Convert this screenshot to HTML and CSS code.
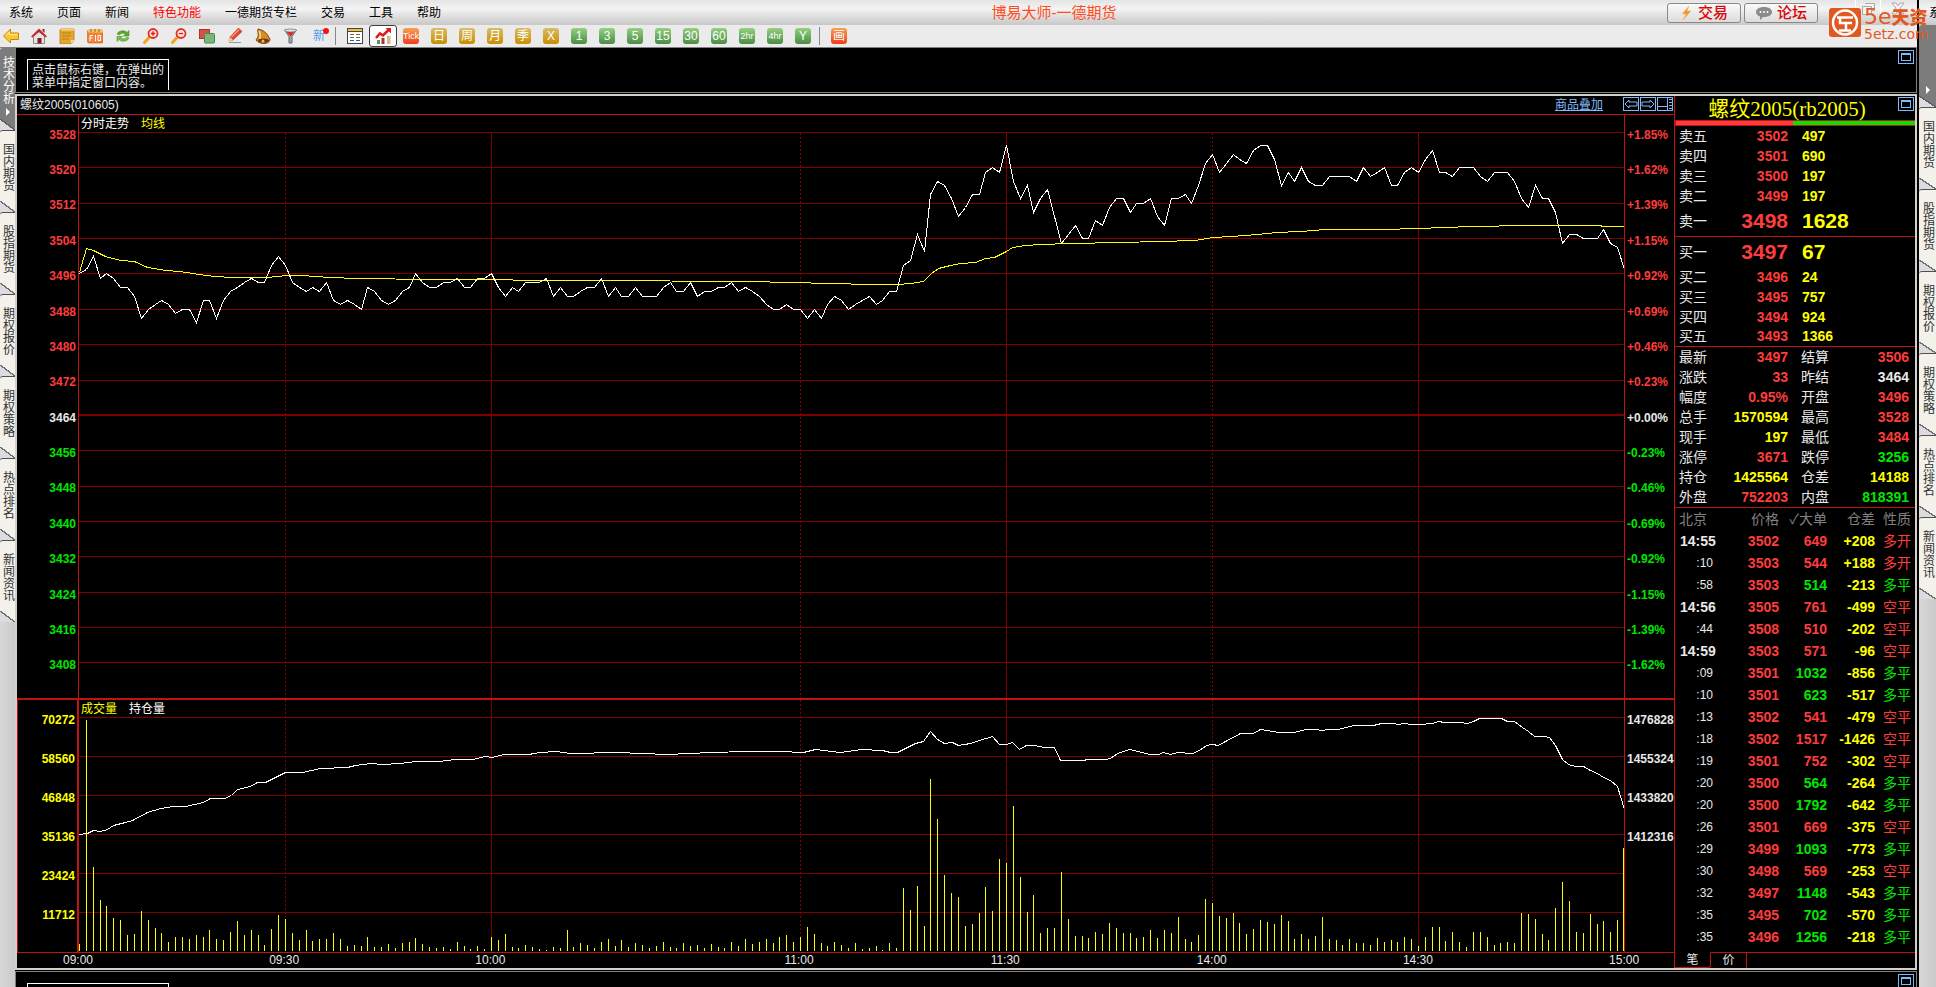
FILE: index.html
```html
<!DOCTYPE html>
<html lang="zh-CN">
<head>
<meta charset="utf-8">
<title>博易大师-一德期货</title>
<link rel="stylesheet" href="styles.css">
</head>
<body>
<div class="window">
  <header class="menubar">
    <nav class="menu">
      <a href="#">系统</a><a href="#">页面</a><a href="#">新闻</a><a href="#" class="hot">特色功能</a><a href="#">一德期货专栏</a><a href="#">交易</a><a href="#">工具</a><a href="#">帮助</a>
    </nav>
    <h1 class="app-title">博易大师-一德期货</h1>
    <div class="actions">
      <button class="action"><svg width="14" height="16" viewBox="0 0 14 16"><path d="M9 1 2 9h4l-3 6 8-9H7z" fill="#f0932b" stroke="#f7c06a" stroke-width=".6"/></svg>交易</button>
      <button class="action"><svg width="18" height="16" viewBox="0 0 18 16"><path d="M9 2c5 0 8 2.300 8 5s-3 5-8 5l-1 0-3 3v-3.500C2.500 10.700 1 9 1 7c0-2.700 3-5 8-5z" fill="#8b8b8b"/><g fill="#fff"><circle cx="5.500" cy="7" r="1"/><circle cx="9" cy="7" r="1"/><circle cx="12.500" cy="7" r="1"/></g></svg>论坛</button>
    </div>
    <div class="win-controls">
      <button aria-label="最小化"><svg width="24" height="20" viewBox="0 0 24 20"><path d="M6 14h9" stroke="#b0b0b0" stroke-width="3"/></svg></button>
      <button aria-label="还原"><svg width="24" height="20" viewBox="0 0 24 20"><path d="M9.500 3.500h9v7h-3M6.500 6.500h9v8h-9z" stroke="#a8a8a8" fill="#f4f4f4"/></svg></button>
      <button aria-label="关闭"><svg width="34" height="20" viewBox="0 0 34 20"><path d="M11 3h4l2 3 2-3h4l-4 5 4 6h-4l-2-3-2 3h-4l4-6z" stroke="#a8a8a8" fill="#f8f8f8"/></svg></button>
    </div>
  </header>

  <div class="toolbar">
    <button class="tool" aria-label="后退"><svg width="16" height="16" viewBox="0 0 16 16"><path d="M.5 8 7.500 1v4H15.500v6.500h-8V15z" fill="#fbc92f" stroke="#c8860a"/><path d="M3 7.500 6.500 4v2.500H14" stroke="#fff0a0" fill="none"/></svg></button>
    <button class="tool" aria-label="首页"><svg width="16" height="16" viewBox="0 0 16 16"><path d="M2.500 8v7.500h11V8L8 3.500z" fill="#e4e4e4" stroke="#8a8a8a"/><path d="M0 8.500 8 .5l8 8-1.500 1L8 4 1.500 9.500z" fill="#c8262e"/><path d="M11.500 1h2v4l-2-2z" fill="#8c3030"/><path d="M6.500 10h4v5.500h-4z" fill="#7c2028"/></svg></button>
    <button class="tool" aria-label="记事本"><svg width="16" height="16" viewBox="0 0 16 16"><path d="M2 1h13v11l-3 4H1V2z" fill="#e6a52c" stroke="#b67a12" stroke-width=".8"/><path d="M3 5h9M3 8h9M3 11h7" stroke="#a8741c" stroke-width=".8"/><path d="M2 1h13v1.500H2z" fill="#f9d47a"/><path d="M12 16v-4h3z" fill="#fae0a0"/></svg></button>
    <button class="tool" aria-label="F10"><svg width="16" height="16" viewBox="0 0 16 16"><rect x=".5" y="2" width="15.500" height="13" rx="1.500" fill="#ee8236" stroke="#c75c18" stroke-width=".6"/><path d="M1 2h15v2.500H1z" fill="#f7c45a"/><path d="M4 1v3M8 1v3M12 1v3" stroke="#a86212"/><path d="M3 13V7.500h3M3 10h2.500M8.500 7v6M11 7.500h2.500v5H11z" stroke="#fff" fill="none"/></svg></button>
    <button class="tool" aria-label="刷新"><svg width="16" height="16" viewBox="0 0 16 16"><path d="M2 6c2-4 8-4 10-1.500L14 2.500V8H8.500l1.800-1.800C8.500 4.600 5.500 5 4.500 7z" fill="#5cac2c" stroke="#3c8418" stroke-width=".5"/><path d="M14 10c-2 4-8 4-10 1.500L2 13.500V8.500h5.500L5.700 10c1.800 1.600 4.800 1.200 5.800-.8z" fill="#78c048" stroke="#3c8418" stroke-width=".5"/></svg></button>
    <button class="tool" aria-label="放大"><svg width="16" height="16" viewBox="0 0 16 16"><path d="m7 8.500-5.500 6" stroke="#f2a51c" stroke-width="3" stroke-linecap="round"/><circle cx="10" cy="5.500" r="4.500" fill="#ffe4e0" stroke="#e03226" stroke-width="1.800"/><path d="M7.800 5.500h4.400M10 3.300v4.400" stroke="#d02020" stroke-width="1.300"/></svg></button>
    <button class="tool" aria-label="缩小"><svg width="16" height="16" viewBox="0 0 16 16"><path d="m7 8.500-5.500 6" stroke="#f2a51c" stroke-width="3" stroke-linecap="round"/><circle cx="10" cy="5.500" r="4.500" fill="#ffe4e0" stroke="#e03226" stroke-width="1.800"/><path d="M7.800 5.500h4.400" stroke="#d02020" stroke-width="1.300"/></svg></button>
    <button class="tool" aria-label="叠加"><svg width="16" height="16" viewBox="0 0 16 16"><rect x=".5" y="1.500" width="10" height="9" fill="#d8504a" stroke="#a83430"/><rect x="5.500" y="5.500" width="10" height="9.500" rx="1" fill="#7cb67c" stroke="#438a4c"/></svg></button>
    <button class="tool" aria-label="画笔"><svg width="16" height="16" viewBox="0 0 16 16"><path d="M11.500 0 15 3.500 6 12l-4 1 1-4z" fill="#e8452c" stroke="#b02c18" stroke-width=".6"/><path d="M12 1.500 4.500 9" stroke="#f79a7c" stroke-width="1.500"/><path d="m3 9 3 3-5 2z" fill="#f5cf94"/><path d="M2 14.500h12" stroke="#999" stroke-width="1"/></svg></button>
    <button class="tool" aria-label="预警"><svg width="16" height="16" viewBox="0 0 16 16"><path d="M3 1c5 1 9 4 10 7l2 3c0 3-3 4.500-6 4.500S2 14 1 12l2-3c1-3-1-5 0-8z" fill="#d98d24" stroke="#7a4410"/><path d="M4 3c2 3 1 5 1 8" stroke="#ffe092" stroke-width="1.500" fill="none"/><ellipse cx="8.500" cy="12.500" rx="5.500" ry="2" fill="#6a3810"/><circle cx="8" cy="13" r="1.500" fill="#f6c050"/></svg></button>
    <button class="tool" aria-label="筛选"><svg width="16" height="16" viewBox="0 0 16 16"><path d="M1.500 2h12L9 8.500V15H6V8.500z" fill="#a8a8a8" stroke="#666"/><path d="M3.500 3.500h8l-4 5z" fill="#e42222"/><ellipse cx="7.500" cy="2.500" rx="6" ry="1.500" fill="#e4e4e4" stroke="#777" stroke-width=".7"/></svg></button>
    <button class="tool new">新<i></i></button>
    <span class="sep"></span>
    <button class="tool" aria-label="报价"><svg width="16" height="16" viewBox="0 0 16 16"><rect x=".5" y=".5" width="15" height="15" fill="#fff" stroke="#444"/><path d="M1 1h14v2H1z" fill="#f3c03c"/><path d="M1 3.500h14" stroke="#444"/><path d="M3 6.500h4M9 6.500h4" stroke="#d43030"/><path d="M3 9.500h4M9 9.500h4" stroke="#2c9a38"/><path d="M3 12.500h4M9 12.500h4" stroke="#2858c0"/></svg></button>
    <button class="tool active" aria-label="走势图"><svg width="16" height="16" viewBox="0 0 16 16"><path d="M2 12h3v4H2z" fill="#5c9650"/><path d="M6.500 10h3v6h-3z" fill="#a43630"/><path d="M12 8h3.500v8H12z" fill="#d8b888"/><path d="m1 10 4-4.500 3 2L14.500 1" stroke="#e01818" stroke-width="2.500" fill="none"/><path d="M10.500 0H16v5.500z" fill="#e01818"/></svg></button>
    <button class="tool"><b class="chip orange narrow">Tick</b></button>
    <button class="tool"><b class="chip gold">日</b></button>
    <button class="tool"><b class="chip gold">周</b></button>
    <button class="tool"><b class="chip gold">月</b></button>
    <button class="tool"><b class="chip gold">季</b></button>
    <button class="tool"><b class="chip gold">X</b></button>
    <button class="tool"><b class="chip green">1</b></button>
    <button class="tool"><b class="chip green">3</b></button>
    <button class="tool"><b class="chip green">5</b></button>
    <button class="tool"><b class="chip green">15</b></button>
    <button class="tool"><b class="chip green">30</b></button>
    <button class="tool"><b class="chip green">60</b></button>
    <button class="tool"><b class="chip green narrow">2hr</b></button>
    <button class="tool"><b class="chip green narrow">4hr</b></button>
    <button class="tool"><b class="chip green">Y</b></button>
    <span class="sep"></span>
    <button class="tool"><b class="chip orange">画</b></button>
  </div>

  <div class="desk">
    <aside class="tabs">
      <button class="tab current"><span>技术分析</span><i></i></button>
      <button class="tab"><span>国内期货</span></button>
      <button class="tab"><span>股指期货</span></button>
      <button class="tab"><span>期权报价</span></button>
      <button class="tab"><span>期权策略</span></button>
      <button class="tab"><span>热点排名</span></button>
      <button class="tab"><span>新闻资讯</span></button>
    </aside>

    <main class="content">
      <section class="hint-panel upper">
        <p class="hint">点击鼠标右键，在弹出的<br>菜单中指定窗口内容。</p>
        <button class="maximize" aria-label="最大化"></button>
      </section>

      <section class="workspace">
        <div class="chart">
          <div class="chart-head">
            <span>螺纹2005(010605)</span>
            <div class="chart-tools">
              <a href="#">商品叠加</a>
              <button aria-label="向左"><svg width="14" height="12" viewBox="0 0 14 12"><path d="M1 6 5 2v2h8v4H5v2z"/></svg></button>
              <button aria-label="向右"><svg width="14" height="12" viewBox="0 0 14 12"><path d="M13 6 9 2v2H1v4h8v2z"/></svg></button>
              <button aria-label="布局"><svg width="14" height="12" viewBox="0 0 14 12"><path d="M0 8.500h9M9.500 0v12M11 1.500h3M11 4.500h3M11 7.500h3M11 10.500h3"/></svg></button>
            </div>
          </div>
          <ol class="axis left price">
            <li class="up">3528</li><li class="up">3520</li><li class="up">3512</li><li class="up">3504</li><li class="up">3496</li><li class="up">3488</li><li class="up">3480</li><li class="up">3472</li><li>3464</li><li class="down">3456</li><li class="down">3448</li><li class="down">3440</li><li class="down">3432</li><li class="down">3424</li><li class="down">3416</li><li class="down">3408</li>
          </ol>
          <div class="pane">
            <svg id="price-plot" viewBox="0 0 1545 583" preserveAspectRatio="none"></svg>
            <div class="legend"><span>分时走势</span><span class="yellow">均线</span></div>
          </div>
          <ol class="axis right price">
            <li class="up">+1.85%</li><li class="up">+1.62%</li><li class="up">+1.39%</li><li class="up">+1.15%</li><li class="up">+0.92%</li><li class="up">+0.69%</li><li class="up">+0.46%</li><li class="up">+0.23%</li><li>+0.00%</li><li class="down">-0.23%</li><li class="down">-0.46%</li><li class="down">-0.69%</li><li class="down">-0.92%</li><li class="down">-1.15%</li><li class="down">-1.39%</li><li class="down">-1.62%</li>
          </ol>
          <div class="divider"></div>
          <ol class="axis left volume yellow">
            <li>70272</li><li>58560</li><li>46848</li><li>35136</li><li>23424</li><li>11712</li>
          </ol>
          <div class="pane">
            <svg id="volume-plot" viewBox="0 0 1545 252" preserveAspectRatio="none"></svg>
            <div class="legend"><span class="yellow">成交量</span><span>持仓量</span></div>
          </div>
          <ol class="axis right volume">
            <li>1476828</li><li>1455324</li><li>1433820</li><li>1412316</li><li></li><li></li>
          </ol>
          <div class="times">
            <span class="m30">09:00</span><span class="m30">09:30</span><span class="m45">10:00</span><span class="m30">11:00</span><span class="m30">11:30</span><span class="m30">14:00</span><span class="m30">14:30</span><span class="end">15:00</span>
          </div>
        </div>

        <div class="quote">
          <h2 class="quote-title">螺纹2005(rb2005)<button class="maximize" aria-label="最大化"></button></h2>
          <div class="ratio"><i class="sell"></i><i class="buy"></i></div>
          <table class="book">
            <tr><th>卖五</th><td>3502</td><td>497</td></tr>
            <tr><th>卖四</th><td>3501</td><td>690</td></tr>
            <tr><th>卖三</th><td>3500</td><td>197</td></tr>
            <tr><th>卖二</th><td>3499</td><td>197</td></tr>
            <tr class="best"><th>卖一</th><td>3498</td><td>1628</td></tr>
          </table>
          <table class="book">
            <tr class="best"><th>买一</th><td>3497</td><td>67</td></tr>
            <tr><th>买二</th><td>3496</td><td>24</td></tr>
            <tr><th>买三</th><td>3495</td><td>757</td></tr>
            <tr><th>买四</th><td>3494</td><td>924</td></tr>
            <tr><th>买五</th><td>3493</td><td>1366</td></tr>
          </table>
          <table class="stats">
            <tr><th>最新</th><td class="up">3497</td><th>结算</th><td class="up">3506</td></tr>
            <tr><th>涨跌</th><td class="up">33</td><th>昨结</th><td>3464</td></tr>
            <tr><th>幅度</th><td class="up">0.95%</td><th>开盘</th><td class="up">3496</td></tr>
            <tr><th>总手</th><td class="yellow">1570594</td><th>最高</th><td class="up">3528</td></tr>
            <tr><th>现手</th><td class="yellow">197</td><th>最低</th><td class="up">3484</td></tr>
            <tr><th>涨停</th><td class="up">3671</td><th>跌停</th><td class="down">3256</td></tr>
            <tr><th>持仓</th><td class="yellow">1425564</td><th>仓差</th><td class="yellow">14188</td></tr>
            <tr><th>外盘</th><td class="up">752203</td><th>内盘</th><td class="down">818391</td></tr>
          </table>
          <table class="trades">
            <thead><tr><th>北京</th><th>价格</th><th>✓大单</th><th>仓差</th><th>性质</th></tr></thead>
            <tbody>
            <tr class="up"><td class="full">14:55</td><td>3502</td><td>649</td><td>+208</td><td>多开</td></tr>
            <tr class="up"><td>:10</td><td>3503</td><td>544</td><td>+188</td><td>多开</td></tr>
            <tr class="down"><td>:58</td><td>3503</td><td>514</td><td>-213</td><td>多平</td></tr>
            <tr class="up"><td class="full">14:56</td><td>3505</td><td>761</td><td>-499</td><td>空平</td></tr>
            <tr class="up"><td>:44</td><td>3508</td><td>510</td><td>-202</td><td>空平</td></tr>
            <tr class="up"><td class="full">14:59</td><td>3503</td><td>571</td><td>-96</td><td>空平</td></tr>
            <tr class="down"><td>:09</td><td>3501</td><td>1032</td><td>-856</td><td>多平</td></tr>
            <tr class="down"><td>:10</td><td>3501</td><td>623</td><td>-517</td><td>多平</td></tr>
            <tr class="up"><td>:13</td><td>3502</td><td>541</td><td>-479</td><td>空平</td></tr>
            <tr class="up"><td>:18</td><td>3502</td><td>1517</td><td>-1426</td><td>空平</td></tr>
            <tr class="up"><td>:19</td><td>3501</td><td>752</td><td>-302</td><td>空平</td></tr>
            <tr class="down"><td>:20</td><td>3500</td><td>564</td><td>-264</td><td>多平</td></tr>
            <tr class="down"><td>:20</td><td>3500</td><td>1792</td><td>-642</td><td>多平</td></tr>
            <tr class="up"><td>:26</td><td>3501</td><td>669</td><td>-375</td><td>空平</td></tr>
            <tr class="down"><td>:29</td><td>3499</td><td>1093</td><td>-773</td><td>多平</td></tr>
            <tr class="up"><td>:30</td><td>3498</td><td>569</td><td>-253</td><td>空平</td></tr>
            <tr class="down"><td>:32</td><td>3497</td><td>1148</td><td>-543</td><td>多平</td></tr>
            <tr class="down"><td>:35</td><td>3495</td><td>702</td><td>-570</td><td>多平</td></tr>
            <tr class="down"><td>:35</td><td>3496</td><td>1256</td><td>-218</td><td>多平</td></tr>
            </tbody>
          </table>
          <div class="quote-tabs"><button class="on">笔</button><button>价</button></div>
        </div>
      </section>

      <section class="hint-panel lower">
        <p class="hint"></p>
        <button class="maximize" aria-label="最大化"></button>
      </section>
    </main>
  </div>
</div>

<div class="next-window">
  <div class="next-menu">系</div>
  <aside class="tabs">
    <button class="tab current" aria-label="技术分析"><i></i></button>
    <button class="tab"><span>国内期货</span></button>
    <button class="tab"><span>股指期货</span></button>
    <button class="tab"><span>期权报价</span></button>
    <button class="tab"><span>期权策略</span></button>
    <button class="tab"><span>热点排名</span></button>
    <button class="tab"><span>新闻资讯</span></button>
  </aside>
</div>

<div class="brand">
  <svg width="32" height="29" viewBox="0 0 32 29"><rect width="32" height="29" rx="3" fill="#e2581f"/><circle cx="16" cy="14.500" r="12" fill="none" stroke="#fff" stroke-width="2.500"/><path d="M8 9.500h16M11 9.500v5.500h12M17 15v8M10 22.500h12" stroke="#fff" stroke-width="2.500" fill="none"/></svg>
  <div class="brand-text"><strong><span>5e</span>天资</strong><small>5etz.com</small></div>
</div>
<script src="app.js"></script>
</body>
</html>
```
FILE: styles.css
```css
* { box-sizing: border-box; }
:root {
  --up: #ff3c3c;
  --down: #00e600;
  --yellow: #ffff00;
  --line: #c01414;
  --frame: #d4d0c8;
  --blue: #80b8f8;
}
body {
  margin: 0;
  height: 100vh;
  display: flex;
  overflow: hidden;
  position: relative;
  background: #000;
  color: #e8e8e8;
  font: 12px/16px "Liberation Sans", "Noto Sans CJK SC", sans-serif;
}
button { font: inherit; color: inherit; background: none; border: 0; padding: 0; margin: 0; }
a { color: inherit; text-decoration: none; }
h1, h2, p, ol { margin: 0; padding: 0; list-style: none; }
table { border-collapse: collapse; border-spacing: 0; }
i { font-style: normal; }
svg { display: block; flex: none; }
.up { color: var(--up); }
.down { color: var(--down); }
.yellow, .legend .yellow { color: var(--yellow); }

.window { flex: 1; min-width: 0; display: flex; flex-direction: column; border-right: 2px solid #000; box-sizing: content-box; }

/* menu bar */
.menubar { height: 25px; display: flex; align-items: center; color: #000; background: linear-gradient(#e4e4e4, #f4f4f4 35%, #e2e2e2 60%, #c8c8c8); }
.menu { display: flex; gap: 24px; padding-left: 9px; }
.menu .hot { color: #ff0000; }
.app-title { flex: 1; text-align: center; font-size: 15px; font-weight: 400; line-height: 20px; color: #ff4c1c; }
.actions { display: flex; gap: 3px; }
.action { width: 74px; height: 20px; display: flex; align-items: center; justify-content: center; gap: 4px; border: 1px solid #888; border-radius: 3px; background: linear-gradient(#fafafa, #dcdcdc); color: #d80808; font-size: 15px; font-weight: 500; line-height: 18px; }
.win-controls { display: flex; padding-left: 13px; width: 99px; height: 20px; align-self: flex-start; }
.win-controls button + button { border-left: 1px solid #fff; }

/* toolbar */
.toolbar { height: 23px; display: flex; align-items: stretch; margin-left: -3px; background: #ebebeb; border-bottom: 1px solid #808080; }
.tool { width: 28px; display: flex; align-items: center; justify-content: center; position: relative; border: 1px solid transparent; }
.tool.active { background: #fff; border: 1px solid #404040; border-radius: 3px; }
.tool.new { color: #4c9cf0; line-height: 16px; }
.tool.new i { position: absolute; right: 3px; top: 2px; width: 6px; height: 6px; border-radius: 50%; background: #ff1010; }
.sep { width: 8px; margin: 2px 0; background: linear-gradient(#888, #888) 2px 0 / 1px 100% no-repeat; }
.chip { width: 16px; height: 16px; border-radius: 3px; color: #fff; font-size: 12px; font-weight: 400; line-height: 16px; text-align: center; overflow: hidden; }
.chip.narrow { font-size: 9px; }
.gold { background: linear-gradient(#d9bc68, #c98e00); }
.green { background: linear-gradient(#96d080, #4a8c44); }
.orange { background: linear-gradient(#f6a052, #f03c1c); }

/* side tabs */
.desk { flex: 1; min-height: 0; display: flex; }
.tabs { width: 15px; flex: none; display: flex; flex-direction: column; background: linear-gradient(90deg, #d8d8d8, #cacaca); }
.tab { height: 82px; flex: none; padding: 12px 0 0; display: flex; flex-direction: column; align-items: center; color: #303030; border-top: 1px solid #505050; border-top-left-radius: 3px; background: linear-gradient(#f2f1ea, #f2f1ea) 0 0 / 100% 70px no-repeat, linear-gradient(to bottom left, #f2f1ea 46%, #707070 46% 54%, #dcdce0 54%) 0 70px / 100% 11px no-repeat; }
.tab span { writing-mode: vertical-rl; line-height: 14px; font-size: 12px; }
.tab.current { color: #fff; border-top: 0; padding-top: 8px; background: linear-gradient(#7c7c7c, #7c7c7c) 0 0 / 100% 71px no-repeat, linear-gradient(to bottom left, #7c7c7c 46%, #606060 46% 54%, #dcdce0 54%) 0 71px / 100% 11px no-repeat; }
.tab i { width: 0; height: 0; margin-top: 4px; border: 4px solid transparent; border-left-color: #fff; border-right: 0; }

.content { flex: 1; min-width: 0; display: flex; flex-direction: column; }

/* empty panels above and below */
.hint-panel { overflow: hidden; display: flex; justify-content: space-between; align-items: flex-start; border-right: 1px solid #808080; }
.hint-panel.upper { height: 45px; flex: none; padding: 2px 2px 0 11px; border-bottom: 1px solid #808080; border-left: 1px solid #808080; }
.hint-panel.lower { height: 16px; flex: none; padding: 2px 2px 0 11px; margin-top: 1px; border-top: 1px solid #808080; border-left: 1px solid #808080; }
.hint { margin-top: 9px; padding: 4px; width: 142px; height: 31px; border: 1px solid #fff; border-bottom: 0; line-height: 13px; white-space: nowrap; }
.maximize { width: 16px; height: 14px; flex: none; border: 1px solid var(--blue); background: linear-gradient(#000, #000) 3px 4px / 8px 5px no-repeat, linear-gradient(var(--blue), var(--blue)) 2px 2px / 10px 8px no-repeat; }

/* workspace */
.workspace { flex: 1; min-height: 0; margin-top: 1px; display: flex; border: 2px solid var(--frame); }
.chart { flex: 1; min-width: 0; display: grid; grid-template-columns: 61px minmax(0, 1fr) 50px; grid-template-rows: 19px minmax(0, 583fr) 2px minmax(0, 252fr) 16px; }
.chart-head { grid-column: 1 / -1; display: flex; justify-content: space-between; padding: 1px 1px 0 3px; border-bottom: 1px solid var(--line); }
.chart-tools { display: flex; gap: 1px; color: var(--blue); }
.chart-tools a { text-decoration: underline; margin-right: 19px; }
.chart-tools button { width: 16px; height: 14px; border: 1px solid var(--blue); }
.chart-tools path { fill: none; stroke: var(--blue); }
.axis { display: flex; flex-direction: column; font-weight: 700; }
.axis li { flex: 1; display: flex; align-items: center; }
.axis.price { padding: 2px 0 15px; }
.axis.volume { padding-bottom: 18px; }
.axis.left li { justify-content: flex-end; padding-right: 2px; }
.axis.right { border-left: 1px solid var(--line); padding-left: 2px; white-space: nowrap; }
.axis.left { border-right: 1px solid var(--line); margin-right: -1px; }
.axis.left.volume { border-left: 1px solid var(--line); border-right-width: 2px; }
.pane { display: grid; grid-template: minmax(0, 1fr) / minmax(0, 1fr); margin-left: 1px; }
.pane > * { grid-area: 1 / 1; }
.pane svg { width: 100%; height: 100%; shape-rendering: crispEdges; }
.pane path { fill: none; stroke-width: 1; vector-effect: non-scaling-stroke; }
.pane .grid-line { stroke: #800000; }
.pane .grid-line.dotted { stroke-dasharray: 2 2; }
.pane .grid-line.base { stroke-width: 2; }
.line-white { stroke: #fff; }
.line-yellow { stroke: var(--yellow); }
.legend { align-self: start; display: flex; gap: 12px; padding: 1px 2px; color: #fff; }
.divider { grid-column: 1 / -1; background: var(--line); }
.times { grid-column: 1 / -1; border-top: 1px solid var(--line); display: flex; padding: 0 65px 0 46px; line-height: 15px; white-space: nowrap; }
.times span { flex: 30 1 0; min-width: 0; }
.times .m45 { flex-grow: 45; }
.times .end { flex: none; width: 0; }

/* quote panel */
.quote { width: 241px; flex: none; border-left: 1px solid var(--line); display: flex; flex-direction: column; font-size: 14px; }
.quote-title { height: 24px; position: relative; padding-right: 16px; text-align: center; color: var(--yellow); font: 400 21px/26px "Liberation Serif", "Noto Sans CJK SC", serif; }
.quote-title .maximize { position: absolute; right: 1px; top: 1px; }
.ratio { height: 6px; flex: none; display: flex; border: 1px solid var(--line); border-right: 0; }
.ratio .sell { flex: 117; background: var(--up); }
.ratio .buy { flex: 121; background: var(--down); }
.quote table { width: 100%; table-layout: fixed; border-bottom: 1px solid var(--line); }
.quote th { font-weight: 400; text-align: left; padding: 0; white-space: nowrap; }
.quote td { font-weight: 700; text-align: right; padding: 0; white-space: nowrap; }
.book tr, .stats tr { height: 20px; line-height: 18px; }
.book .best { height: 30px; }
.quote .book th, .quote .stats th:first-child { width: 45px; padding-left: 4px; }
.book td { color: var(--up); width: 68px; }
.quote .book td:last-child { color: var(--yellow); text-align: left; width: auto; padding-left: 14px; }
.book .best td { font-size: 21px; }
.stats td { width: 68px; }
.quote .stats th:nth-child(3) { width: 58px; padding-left: 13px; }
.quote .stats td:last-child { width: auto; padding-right: 6px; }
.trades tr { height: 22px; line-height: 20px; }
.quote .trades { border-bottom: 0; }
.trades th { color: #808080; }
.quote .trades th + th { text-align: right; }
.quote .trades th:nth-child(1) { width: 50px; padding-left: 4px; }
.trades th:nth-child(2) { width: 54px; }
.trades th:nth-child(3) { width: 48px; }
.trades th:nth-child(4) { width: 48px; }
.quote .trades th:last-child { padding-right: 4px; }
.quote .trades td:first-child { color: #e8e8e8; font-size: 12px; font-weight: 400; padding-right: 12px; }
.quote .trades td.full { font-size: 14px; font-weight: 700; text-align: left; padding: 0 0 0 5px; }
.trades td:nth-child(2) { color: var(--up); }
.trades td:nth-child(4) { color: var(--yellow); }
.quote .trades td:last-child { font-weight: 400; padding-right: 4px; }
.quote-tabs { margin-top: auto; height: 16px; display: flex; font-size: 12px; line-height: 14px; }
.quote-tabs button { width: 36px; border-right: 1px solid var(--line); border-top: 1px solid var(--line); line-height: 13px; }
.quote-tabs .on { border-top-color: #000; border-bottom: 1px solid var(--line); border-bottom-right-radius: 3px; }
.quote-tabs::after { content: ""; flex: 1; border-top: 1px solid var(--line); }

/* neighbouring window */
.next-window { width: 17px; flex: none; display: flex; flex-direction: column; overflow: hidden; background: #d0d0d0; }
.next-menu { height: 25px; padding-left: 10px; line-height: 26px; white-space: nowrap; color: #000; background: linear-gradient(#e4e4e4, #f4f4f4 35%, #e2e2e2 60%, #c8c8c8); }
.next-window .tabs { flex: 1; width: 17px; }
.next-window .tab.current i { margin: 53px 0 0; }

/* watermark */
.brand { position: absolute; right: 4px; top: 8px; display: flex; gap: 3px; color: #e2581f; }
.brand-text { display: flex; flex-direction: column; width: 68px; white-space: nowrap; }
.brand strong { display: flex; align-items: baseline; font-size: 18px; line-height: 17px; font-weight: 900; }
.brand strong span { font: 400 22px/17px "DejaVu Sans", sans-serif; }
.brand small { font: 14px/14px "DejaVu Sans", sans-serif; }
```
FILE: app.js
```js
const WIDTH = 1545;
const MINUTES = 225;
const xAt = i => Math.round(i * WIDTH / MINUTES);

const prices = [
  3496,3497,3500,3495,3496,3495,3493,3493,3491,3486,3488,3489,3490,3489,3487,3488,3488,3485,3490,3490,
  3486,3490,3492,3493,3494,3495,3494,3494,3498,3500,3498,3494,3493,3492,3493,3492,3494,3490,3489,3490,
  3489,3488,3493,3492,3490,3489,3490,3492,3493,3496,3494,3493,3493,3494,3494,3495,3493,3493,3495,3495,
  3496,3493,3491,3493,3492,3494,3494,3494,3495,3491,3493,3491,3491,3492,3493,3493,3495,3491,3493,3491,
  3491,3493,3491,3491,3491,3493,3494,3492,3492,3494,3491,3492,3492,3493,3493,3494,3492,3493,3492,3491,
  3489,3488,3488,3489,3488,3488,3486,3488,3486,3489,3491,3490,3488,3489,3490,3491,3489,3490,3492,3492,
  3498,3499,3505,3501,3514,3517,3516,3513,3509,3511,3514,3514,3519,3520,3519,3525,3517,3513,3516,3510,
  3513,3515,3509,3503,3505,3507,3504,3504,3508,3507,3511,3513,3513,3510,3512,3512,3513,3509,3507,3513,
  3513,3514,3512,3516,3521,3523,3519,3521,3523,3522,3521,3524,3525,3525,3522,3516,3519,3517,3520,3517,
  3516,3516,3518,3518,3518,3518,3517,3520,3518,3519,3520,3516,3516,3519,3520,3519,3522,3524,3519,3519,
  3518,3520,3520,3520,3518,3517,3519,3519,3519,3517,3513,3511,3516,3513,3513,3510,3503,3505,3505,3504,
  3504,3504,3506,3503,3502,3497
];

const average = [
  0,157, 7,133, 14,135, 26,141, 41,145, 55,146, 68,152, 86,155, 100,156, 120,159, 135,161, 154,162, 187,162,
  208,160, 223,160, 250,162, 278,163, 353,164, 512,165, 669,166, 711,167, 791,169, 819,169, 831,168, 844,166,
  852,158, 859,153, 871,150, 881,148, 896,147, 906,143, 915,142, 927,136, 933,132, 946,130, 961,129, 991,128,
  1041,127, 1080,126, 1116,125, 1134,122, 1152,121, 1178,119, 1197,117, 1221,116, 1246,114, 1300,114,
  1341,113, 1362,112, 1396,111, 1444,110, 1520,110, 1524,111, 1545,111
];

const interest = [
  0,134, 8,133, 14,130, 21,131, 28,129, 34,125, 46,122, 53,120, 68,112, 81,108, 94,106, 106,106, 124,102, 131,98,
  145,98, 152,95, 158,89, 171,86, 178,82, 186,82, 206,72, 223,72, 241,68, 268,67, 276,65, 291,63, 303,64, 321,63,
  336,61, 359,61, 376,59, 393,59, 406,56, 413,57, 424,54, 449,54, 461,52, 477,51, 491,53, 538,52, 588,54,
  631,52, 668,51, 700,51, 724,52, 736,49, 761,52, 782,49, 803,50, 811,52, 818,52, 836,43, 844,41, 851,31, 858,39,
  865,43, 873,42, 879,45, 891,43, 900,40, 913,36, 920,44, 927,44, 933,42, 940,49, 947,45, 955,45, 965,47,
  975,47, 981,60, 1005,60, 1007,59, 1026,59, 1031,58, 1038,53, 1050,49, 1071,54, 1079,54, 1084,52, 1091,54,
  1098,52, 1113,53, 1120,50, 1127,45, 1133,44, 1139,45, 1146,41, 1161,33, 1174,33, 1181,29, 1200,32, 1215,32,
  1226,29, 1236,29, 1243,30, 1249,29, 1259,29, 1274,25, 1294,25, 1302,23, 1313,23, 1319,24, 1325,23, 1332,24,
  1340,24, 1353,23, 1359,21, 1365,22, 1381,22, 1388,23, 1394,21, 1400,18, 1422,18, 1428,21, 1435,21, 1443,27,
  1449,31, 1455,36, 1464,36, 1470,37, 1476,45, 1483,59, 1489,64, 1496,66, 1504,66, 1511,70, 1518,73, 1524,77,
  1531,80, 1538,86, 1545,109
];

const volumes = [
  7,231,84,51,45,33,31,16,17,40,31,23,18,9,14,14,12,16,14,21,
  12,11,19,30,16,21,16,6,22,36,32,18,11,21,10,12,12,18,12,5,
  6,5,14,4,4,7,3,8,9,13,7,4,3,4,2,9,5,2,5,2,
  14,11,17,4,3,6,4,2,1,4,3,21,4,8,6,3,9,12,5,11,
  4,8,6,3,5,9,4,3,8,5,6,3,7,4,3,9,5,12,7,9,
  12,8,14,16,9,14,24,17,8,5,9,6,3,8,2,3,5,1,8,3,
  63,41,65,25,172,132,76,58,54,25,27,38,64,40,92,88,145,74,39,56,
  18,23,23,79,32,15,15,13,19,17,28,23,18,18,13,14,21,13,21,18,
  34,12,9,16,52,48,35,33,38,28,17,22,31,29,27,36,30,12,17,12,
  15,34,12,11,6,12,8,8,6,13,9,11,9,14,12,5,14,24,24,10,
  19,9,4,19,19,14,6,8,9,8,38,37,32,17,11,43,69,50,19,18,
  37,27,30,19,31,103
];

function add(svg, className, d) {
  const path = document.createElementNS('http://www.w3.org/2000/svg', 'path');
  path.setAttribute('class', className);
  path.setAttribute('d', d);
  svg.appendChild(path);
}

function polyline(flat) {
  let d = '';
  for (let i = 0; i < flat.length; i += 2) {
    d += (i ? 'L' : 'M') + (flat[i] + 0.5) + ' ' + (flat[i + 1] + 0.5);
  }
  return d;
}

function verticals(svg, top, bottom) {
  [30, 105, 165].forEach(m => add(svg, 'grid-line dotted', `M${xAt(m) + 0.5} ${top}V${bottom}`));
  [60, 135, 195].forEach(m => add(svg, 'grid-line', `M${xAt(m) + 0.5} ${top}V${bottom}`));
}

const pricePlot = document.getElementById('price-plot');
verticals(pricePlot, 18, 583);
for (let row = 0; row < 16; row++) {
  const y = Math.round(17 + row * 35.36);
  add(pricePlot, row === 8 ? 'grid-line base' : 'grid-line', `M0 ${row === 8 ? y : y + 0.5}H${WIDTH}`);
}
add(pricePlot, 'line-yellow', polyline(average));
add(pricePlot, 'line-white', polyline(prices.flatMap((p, i) => [xAt(i), Math.round(17 + (3528 - p) * 4.42)])));

const volumePlot = document.getElementById('volume-plot');
verticals(volumePlot, 0, 251);
for (let row = 0; row < 6; row++) {
  add(volumePlot, 'grid-line', `M0 ${17.5 + row * 39}H${WIDTH}`);
}
add(volumePlot, 'line-yellow', volumes.map((v, i) => `M${Math.min(xAt(i), WIDTH - 1) + 0.5} 251v${-v}`).join(''));
add(volumePlot, 'line-white', polyline(interest));
```
